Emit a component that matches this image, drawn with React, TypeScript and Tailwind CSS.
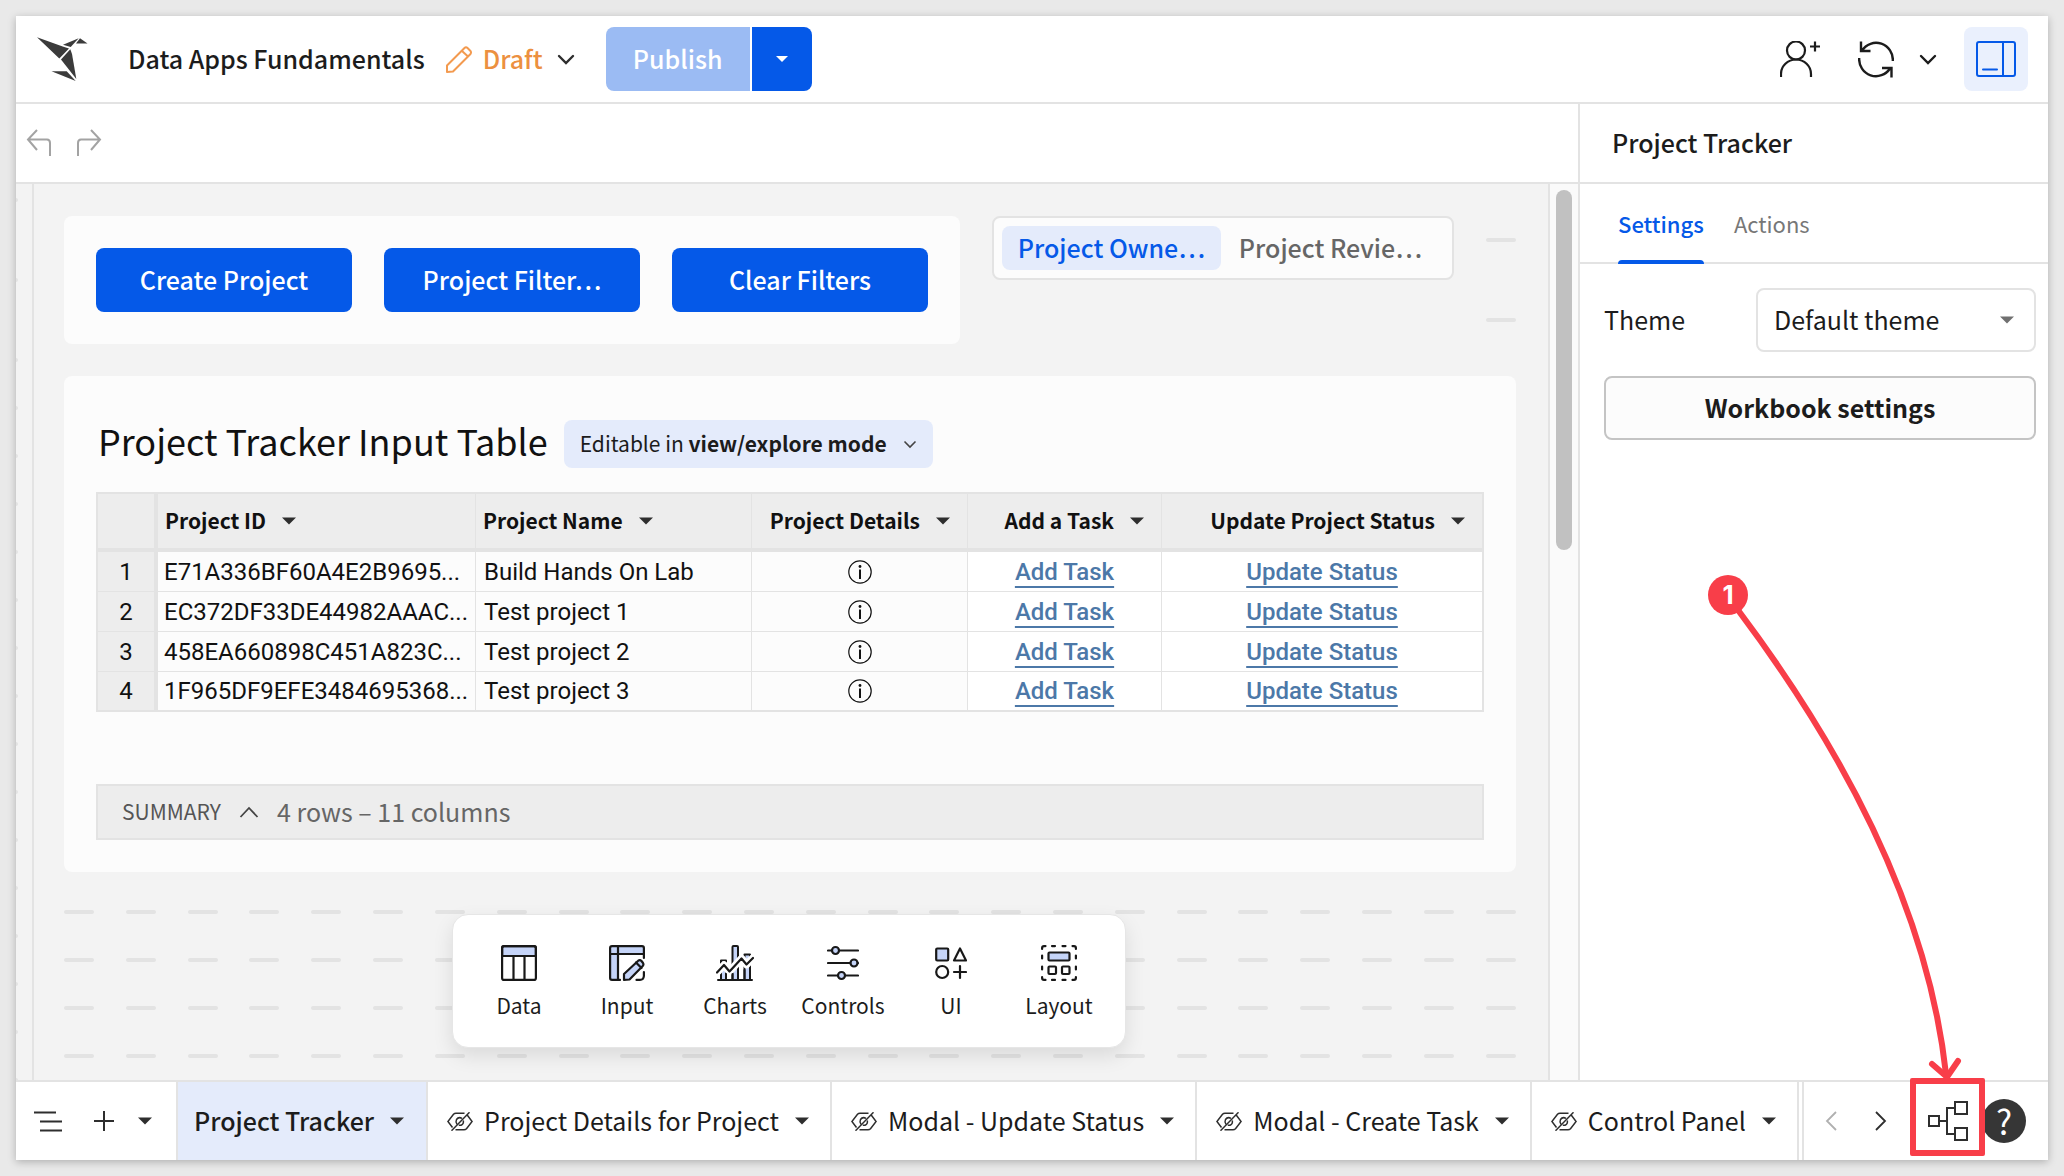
import React from "react";

type IconProps = { className?: string };

function Logo() {
  return (
    <svg width="52" height="46" viewBox="0 0 52 46" className="shrink-0" fill="#3b3b3b" aria-hidden="true">
      <path d="M0 1.300L25.700 10.500L32 12.500L22.300 22.500z" />
      <path d="M33.300 13.300L35 18L39.300 43L24 23.500z" />
      <path d="M26 8.700L41.700 2.200L33.700 11z" />
      <path d="M43 2.200L50.500 7.400H39z" />
      <path d="M14.500 35.200H29.700L38.700 45z" />
    </svg>
  );
}

function Caret({ className = "" }: IconProps) {
  return (
    <svg width="14" height="8" viewBox="0 0 14 8" className={"shrink-0 " + className} aria-hidden="true">
      <path d="M0 0.500h14L7 7.500z" fill="currentColor" />
    </svg>
  );
}

function ChevronDown({ className = "" }: IconProps) {
  return (
    <svg width="18" height="11" viewBox="0 0 18 11" fill="none" className={"shrink-0 " + className} aria-hidden="true">
      <path d="M2 2l7 7 7-7" stroke="currentColor" strokeWidth="2.400" strokeLinecap="round" />
    </svg>
  );
}

function PencilIcon() {
  return (
    <svg width="26" height="27" viewBox="0 0 26 27" fill="none" stroke="#f39a4f" strokeWidth="2" strokeLinejoin="round" className="shrink-0" aria-hidden="true">
      <path d="M1 26V19.500L18.500 2Q20 0.500 21.500 2L24.500 5Q25.500 6.500 24.500 8L7 25.500z" />
      <path d="M16 5l6 5.500" />
    </svg>
  );
}

function UndoIcon() {
  return (
    <svg width="26" height="28" viewBox="0 0 26 28" fill="none" stroke="#a3a3a3" strokeWidth="2" aria-hidden="true">
      <path d="M11 1L2 10.500L11 21M2 10.500H21Q24 10.500 24 14V27" />
    </svg>
  );
}

function RedoIcon() {
  return (
    <svg width="26" height="28" viewBox="0 0 26 28" fill="none" stroke="#a3a3a3" strokeWidth="2" aria-hidden="true">
      <path d="M15 1L24 10.500L15 21M24 10.500H5Q2 10.500 2 14V27" />
    </svg>
  );
}

function AddUserIcon() {
  return (
    <svg width="40" height="36" viewBox="0 0 40 36" fill="none" stroke="#1c1c1c" strokeWidth="2.200" aria-hidden="true">
      <circle cx="16" cy="9.500" r="9" />
      <path d="M1 36v-3A15 14.500 0 0 1 31 33v3M30 5.500h10M35 0.500v10" />
    </svg>
  );
}

function RefreshIcon() {
  return (
    <svg width="36" height="37" viewBox="0 0 36 37" fill="none" stroke="#1c1c1c" strokeWidth="2.400" aria-hidden="true">
      <path d="M34.800 20A16.800 17 0 0 0 4 9.500M3 0.500V10H12.500" />
      <path d="M1.200 17A16.800 17 0 0 0 32 27.500M33.500 36.500V27H24" />
    </svg>
  );
}

function PanelIcon() {
  return (
    <svg width="40" height="36" viewBox="0 0 40 36" fill="none" stroke="#0559e8" strokeWidth="2" aria-hidden="true">
      <rect x="1" y="1" width="38" height="34" rx="2" />
      <path d="M27 1v34M7 28.500h14" strokeLinecap="round" />
    </svg>
  );
}

function InfoIcon() {
  return (
    <svg width="24" height="24" viewBox="0 0 24 24" fill="none" className="mx-auto" aria-hidden="true">
      <circle cx="12" cy="12" r="11.200" stroke="#111" strokeWidth="1.200" />
      <circle cx="12" cy="6.500" r="1.400" fill="#111" />
      <path d="M12 9.500V19" stroke="#111" strokeWidth="2" />
    </svg>
  );
}

function HiddenIcon() {
  return (
    <svg width="26" height="19" viewBox="0 0 26 19" fill="none" stroke="#2e2e2e" strokeWidth="1.500" className="shrink-0" aria-hidden="true">
      <path d="M17.500 1.200H9Q7.500 1.200 6.500 2.200L0.900 9.500L5.500 15.500M20 2.700L25.100 9.500L19.500 16.800Q18.500 17.800 17 17.800H8.500" />
      <path d="M22.500 0.300L4.500 18.700" />
      <path d="M15 6.300Q11.500 4.500 9.500 7.500Q8.300 10 10 12.300M16.300 8.500Q17 12 14 13.300L11.800 13.200" />
    </svg>
  );
}

function OutlineIcon() {
  return (
    <svg width="29" height="21" viewBox="0 0 29 21" stroke="#2e2e2e" strokeWidth="2" aria-hidden="true">
      <path d="M0 1.500h22M6 10.500h22M6 19.500h22" />
    </svg>
  );
}

function PlusIcon() {
  return (
    <svg width="20" height="20" viewBox="0 0 20 20" stroke="#2e2e2e" strokeWidth="2" aria-hidden="true">
      <path d="M10 0v20M0 10h20" />
    </svg>
  );
}

function LineageIcon() {
  return (
    <svg width="41" height="40" viewBox="0 0 41 40" fill="none" stroke="#2e2e2e" strokeWidth="2" aria-hidden="true">
      <rect x="1" y="15" width="10" height="10" />
      <rect x="27" y="1" width="12" height="12" />
      <rect x="27" y="27" width="12" height="12" />
      <path d="M11 20h8M27 7h-8v26h8" />
    </svg>
  );
}

const stroke = { stroke: "#181818", strokeWidth: 2.2, strokeLinecap: "round", strokeLinejoin: "round" } as const;

function DataIcon() {
  return (
    <svg width="36" height="36" viewBox="0 0 36 36" fill="none" {...stroke} aria-hidden="true">
      <path d="M1.100 11V3Q1.100 1.100 3 1.100H33Q34.900 1.100 34.900 3V11z" fill="#c5d4f8" />
      <rect x="1.100" y="1.100" width="33.800" height="33.800" rx="2" />
      <path d="M1.100 11H34.900M12.500 11V35M23.500 11V35" />
    </svg>
  );
}

function InputIcon() {
  return (
    <svg width="36" height="36" viewBox="0 0 36 36" fill="none" {...stroke} aria-hidden="true">
      <path d="M9 1.100H33Q34.900 1.100 34.900 3V9H9V35H3Q1.100 35 1.100 33V3Q1.100 1.100 3 1.100z" fill="#c5d4f8" stroke="none" />
      <path d="M34.900 13V3Q34.900 1.100 33 1.100H3Q1.100 1.100 1.100 3V33Q1.100 34.900 3 34.900H11M9 1.100V35M1.100 9H34.900" />
      <path d="M15 34.900V29L29.500 15.500Q31 14.500 32.500 16L34 18Q35 19.500 33.700 21L20.500 34.500z" fill="#c5d4f8" />
      <path d="M27 17.500l5.500 5.500M34.900 27V31Q34.500 34.900 31 34.900H27.500" />
    </svg>
  );
}

function ChartsIcon() {
  return (
    <svg width="38" height="36" viewBox="0 0 38 36" fill="none" {...stroke} aria-hidden="true">
      <path d="M5 35V15.500H10V35M16.500 35V2Q16.500 1.100 17.500 1.100H21Q22 1.100 22 2V35M28.500 35V9.500H34V35" fill="#c5d4f8" strokeWidth="2" />
      <path d="M1 27.500L8 20L13.500 26.500L25.500 13.500L30.500 19.500L37 13" stroke="#fff" strokeWidth="7.500" />
      <path d="M1 27.500L8 20L13.500 26.500L25.500 13.500L30.500 19.500L37 13" />
      <path d="M2 34.900H36M5 30.500V35M10 29V35M16.500 29V35M22 25V35M28.500 25V35M34 24V35" strokeWidth="2" />
    </svg>
  );
}

function ControlsIcon() {
  return (
    <svg width="32" height="36" viewBox="0 0 32 36" fill="#c5d4f8" {...stroke} aria-hidden="true">
      <path d="M1 5.500H31M1 18H31M1 30.500H31" />
      <circle cx="8.500" cy="5.500" r="3.500" />
      <circle cx="27" cy="18" r="3.500" />
      <circle cx="14.500" cy="30.500" r="3.500" />
    </svg>
  );
}

function UiIcon() {
  return (
    <svg width="32" height="36" viewBox="0 0 32 36" fill="none" {...stroke} aria-hidden="true">
      <rect x="1.200" y="3.500" width="12" height="12" rx="1" fill="#c5d4f8" />
      <path d="M25 3.500L31 15.500H19z" />
      <circle cx="7.200" cy="27" r="6" />
      <path d="M25 21v12M19 27h12" />
    </svg>
  );
}

function LayoutIcon() {
  return (
    <svg width="36" height="36" viewBox="0 0 36 36" fill="none" {...stroke} aria-hidden="true">
      <path d="M1.100 4V3Q1.100 1.100 3 1.100H4.500M31.500 1.100H33Q34.900 1.100 34.900 3V4M34.900 32V33Q34.900 34.900 33 34.900H31.500M4.500 34.900H3Q1.100 34.900 1.100 33V32" />
      <path d="M11 1.100H14M21.500 1.100H24.500M11 34.900H14M21.500 34.900H24.500M1.100 10.500V13.500M1.100 21.500V24.500M34.900 10.500V13.500M34.900 21.500V24.500" />
      <rect x="7.500" y="7.500" width="21" height="8" rx="1" fill="#c5d4f8" />
      <rect x="7.500" y="21.500" width="7.500" height="7.500" rx="1" />
      <rect x="21" y="21.500" width="7.500" height="7.500" rx="1" />
    </svg>
  );
}

const rows = [
  { id: "E71A336BF60A4E2B9695...", name: "Build Hands On Lab" },
  { id: "EC372DF33DE44982AAAC...", name: "Test project 1" },
  { id: "458EA660898C451A823C...", name: "Test project 2" },
  { id: "1F965DF9EFE3484695368...", name: "Test project 3" },
];

const elements = [
  { label: "Data", Icon: DataIcon },
  { label: "Input", Icon: InputIcon },
  { label: "Charts", Icon: ChartsIcon },
  { label: "Controls", Icon: ControlsIcon },
  { label: "UI", Icon: UiIcon },
  { label: "Layout", Icon: LayoutIcon },
];

const pages = ["Project Details for Project", "Modal - Update Status", "Modal - Create Task", "Control Panel"];

function Header() {
  return (
    <header className="flex h-[88px] shrink-0 items-center border-b-2 border-[#e3e3e3] pr-5 pl-[21px]">
      <Logo />
      <h1 className="ml-[39px] text-[25px] font-medium whitespace-nowrap">Data Apps Fundamentals</h1>
      <button className="ml-[21px] flex items-center text-[25px] font-medium text-[#ec9040]">
        <PencilIcon />
        <span className="ml-[11px]">Draft</span>
        <ChevronDown className="ml-[14px] text-[#2e2e2e]" />
      </button>
      <div className="ml-[31px] flex h-16 gap-[2px] overflow-hidden rounded-lg text-white">
        <button className="w-[144px] bg-[#9bbbf3] text-[25px] font-medium">Publish</button>
        <button className="flex w-[60px] items-center justify-center bg-[#0559e8]" aria-label="Publish options">
          <Caret className="w-[12px]" />
        </button>
      </div>
      <div className="ml-auto flex items-center">
        <button aria-label="Share"><AddUserIcon /></button>
        <button className="ml-[38px]" aria-label="Refresh"><RefreshIcon /></button>
        <button className="ml-[25px]" aria-label="Refresh options"><ChevronDown /></button>
        <button className="ml-[27px] flex size-16 items-center justify-center rounded-lg bg-[#eaf0fd]" aria-label="Toggle panel">
          <PanelIcon />
        </button>
      </div>
    </header>
  );
}

function HeadCell({ children, right = false }: { children: React.ReactNode; right?: boolean }) {
  return (
    <th className="h-[58px] border-r border-b-4 border-[#e3e3e3] p-0 last:border-r-0">
      <div className={right ? "flex items-center justify-end gap-4 pr-[17px]" : "flex items-center gap-4 pl-[7px]"}>
        <span className="text-[21px] font-bold whitespace-nowrap">{children}</span>
        <Caret className="text-[#2e2e2e]" />
      </div>
    </th>
  );
}

function ProjectTable() {
  return (
    <div className="mt-6 border-2 border-[#e3e3e3]">
      <table className="w-full table-fixed border-separate border-spacing-0 text-[#111]">
        <colgroup>
          <col className="w-[60px]" />
          <col className="w-[318px]" />
          <col className="w-[276px]" />
          <col className="w-[216px]" />
          <col className="w-[194px]" />
          <col />
        </colgroup>
        <thead className="bg-[#ededed]">
          <tr>
            <th className="border-r-4 border-b-4 border-[#e3e3e3]" aria-label="Row" />
            <HeadCell>Project ID</HeadCell>
            <HeadCell>Project Name</HeadCell>
            <HeadCell right>Project Details</HeadCell>
            <HeadCell right>Add a Task</HeadCell>
            <HeadCell right>Update Project Status</HeadCell>
          </tr>
        </thead>
        <tbody className="font-[Roboto,sans-serif] text-[24px] leading-[38px] [&>tr:last-child>*]:h-[38px] [&>tr:last-child>*]:border-b-0">
          {rows.map((r, i) => (
            <tr key={r.id}>
              <th className="h-10 border-r-4 border-b border-[#e3e3e3] bg-[#ededed] p-0 text-center font-normal">{i + 1}</th>
              <td className="overflow-hidden border-r border-b border-[#e3e3e3] p-0 pl-1.5 whitespace-nowrap">{r.id}</td>
              <td className="border-r border-b border-[#e3e3e3] p-0 pl-2">{r.name}</td>
              <td className="border-r border-b border-[#e3e3e3] p-0"><InfoIcon /></td>
              <td className="border-r border-b border-[#e3e3e3] bg-white p-0 text-center">
                <a href="#add-task" className="font-medium text-[#4c78a8] underline decoration-2 underline-offset-[6px] [text-decoration-skip-ink:none]">Add Task</a>
              </td>
              <td className="border-b border-[#e3e3e3] bg-white p-0 text-center">
                <a href="#update-status" className="font-medium text-[#4c78a8] underline decoration-2 underline-offset-[6px] [text-decoration-skip-ink:none]">Update Status</a>
              </td>
            </tr>
          ))}
        </tbody>
      </table>
    </div>
  );
}

function Dash() {
  return <span className="h-1 w-[30px] shrink-0 rounded-xs bg-[#e3e3e3]" />;
}

function Canvas() {
  const action = "h-16 rounded-lg bg-[#0559e8] text-[25px] font-medium text-white";
  return (
    <div className="relative min-w-0 flex-1 overflow-hidden border-x-2 border-[#e3e3e3] pt-8 pr-8 pl-[30px]">
      <div className="grid grid-cols-[896fr_462fr_30fr] items-start gap-8">
        <div className="grid grid-cols-3 gap-8 rounded-lg bg-[#fcfcfc] p-8">
          <button className={action}>Create Project</button>
          <button className={action}>Project Filter…</button>
          <button className={action}>Clear Filters</button>
        </div>
        <div className="flex h-16 items-center rounded-lg border-2 border-[#e3e3e3] bg-[#fcfcfc] px-2 text-[25px] font-medium whitespace-nowrap" role="tablist">
          <button role="tab" aria-selected="true" className="h-11 flex-1 rounded-lg bg-[#e4ebfb] text-[#0559e8]">Project Owne…</button>
          <button role="tab" aria-selected="false" className="h-11 flex-1 pr-1 text-[#666]">Project Revie…</button>
        </div>
        <div className="flex flex-col gap-[76px] pt-[22px]">
          <Dash />
          <Dash />
        </div>
      </div>

      <section className="mt-8 rounded-lg bg-[#fcfcfc] px-8 pt-11 pb-8">
        <div className="flex h-12 items-center">
          <h2 className="pb-2 pl-0.5 text-[36px] text-[#111]">Project Tracker Input Table</h2>
          <button className="ml-4 flex h-12 items-center rounded-lg bg-[#e4ebfb] px-4 text-[21px]">
            <span>Editable in <span className="font-bold">view/explore mode</span></span>
            <svg width="14" height="9" viewBox="0 0 14 9" fill="none" className="ml-4" aria-hidden="true">
              <path d="M1.500 1.500L7 7l5.500-5.500" stroke="#444" strokeWidth="1.600" />
            </svg>
          </button>
        </div>
        <ProjectTable />
        <div className="mt-[72px] flex h-14 items-center border-2 border-[#e3e3e3] bg-[#ededed] pl-6">
          <button className="flex items-center text-[21px] text-[#555]">
            SUMMARY
            <svg width="20" height="12" viewBox="0 0 20 12" fill="none" className="ml-[18px]" aria-hidden="true">
              <path d="M1.500 11L10 2l8.500 9" stroke="#444" strokeWidth="1.800" />
            </svg>
          </button>
          <span className="ml-[18px] text-[25px] text-[#666]">4 rows – 11 columns</span>
        </div>
      </section>

      <div className="mt-[38px] flex flex-col gap-11" aria-hidden="true">
        {[0, 1, 2, 3].map((r) => (
          <div key={r} className="flex justify-between">
            {Array.from({ length: 24 }, (_, c) => <Dash key={c} />)}
          </div>
        ))}
      </div>

      <div className="absolute right-1 bottom-8 left-0 flex justify-center">
        <div className="flex h-[134px] items-center rounded-2xl border border-[#e6e6e6] bg-white px-3 pt-1 shadow-[0_8px_20px_rgba(0,0,0,0.10)]">
          {elements.map(({ label, Icon }) => (
            <button key={label} className="flex w-[108px] flex-col items-center gap-2 text-[21px] leading-8">
              <Icon />
              {label}
            </button>
          ))}
        </div>
      </div>
    </div>
  );
}

function SidePanel() {
  return (
    <aside className="flex w-[470px] shrink-0 flex-col border-l-2 border-[#e3e3e3]">
      <h2 className="flex h-20 items-center border-b-2 border-[#e3e3e3] pl-8 text-[25px] font-medium">Project Tracker</h2>
      <div className="flex h-20 gap-[30px] border-b-2 border-[#e3e3e3] pl-[38px] text-[22px]" role="tablist">
        <button role="tab" aria-selected="true" className="relative h-full font-medium text-[#0559e8]">
          Settings
          <span className="absolute inset-x-0 -bottom-0.5 h-1 rounded-t bg-[#0559e8]" />
        </button>
        <button role="tab" aria-selected="false" className="h-full text-[#777]">Actions</button>
      </div>
      <div className="flex flex-col gap-6 pt-6 pr-3 pl-6 text-[25px]">
        <div className="flex items-center justify-between">
          <label htmlFor="theme">Theme</label>
          <div className="relative w-[280px]">
            <select id="theme" className="h-16 w-full appearance-none rounded-lg border-2 border-[#e3e3e3] bg-white pl-4">
              <option>Default theme</option>
            </select>
            <Caret className="pointer-events-none absolute top-7 right-[22px] text-[#707070]" />
          </div>
        </div>
        <button className="h-16 rounded-lg border-2 border-[#c4c4c4] bg-[#fcfcfc] font-bold">Workbook settings</button>
      </div>
    </aside>
  );
}

function BottomBar() {
  return (
    <footer className="flex h-20 shrink-0 border-t-2 border-[#e3e3e3] text-[25px] whitespace-nowrap">
      <div className="flex w-[160px] shrink-0 items-center pl-[18px]">
        <button aria-label="Page list"><OutlineIcon /></button>
        <button className="ml-[31px]" aria-label="Add page"><PlusIcon /></button>
        <button className="ml-6" aria-label="Add page options"><Caret className="text-[#2e2e2e]" /></button>
      </div>
      <nav className="flex min-w-0 flex-1 overflow-hidden">
        <button className="flex shrink-0 items-center gap-4 border-x-2 border-[#e3e3e3] bg-[#e4ebfb] pr-[22px] pl-4 font-medium">
          Project Tracker
          <Caret className="text-[#2e2e2e]" />
        </button>
        {pages.map((p) => (
          <button key={p} className="flex shrink-0 items-center border-r-2 border-[#e3e3e3] pr-[21px] pl-[19px]">
            <HiddenIcon />
            <span className="ml-[11px]">{p}</span>
            <Caret className="ml-4 text-[#2e2e2e]" />
          </button>
        ))}
      </nav>
      <div className="flex w-[246px] shrink-0 items-center border-l-2 border-[#e3e3e3] pl-[21px]">
        <button aria-label="Previous pages">
          <svg width="12" height="20" viewBox="0 0 12 20" fill="none" aria-hidden="true">
            <path d="M11 1L2 10l9 9" stroke="#b0b0b0" strokeWidth="1.800" />
          </svg>
        </button>
        <button className="ml-[38px]" aria-label="Next pages">
          <svg width="12" height="20" viewBox="0 0 12 20" fill="none" aria-hidden="true">
            <path d="M1 1l9 9-9 9" stroke="#2e2e2e" strokeWidth="1.800" />
          </svg>
        </button>
        <button className="relative z-10 ml-[41px]" aria-label="Lineage">
          <LineageIcon />
          <span className="absolute -top-[23px] -right-4 -bottom-[15px] -left-[18px] rounded-xs border-6 border-[#f83e49]" />
        </button>
        <button className="ml-[13px] flex size-11 items-center justify-center rounded-full bg-[#363636] text-[34px] leading-none text-white" aria-label="Help">?</button>
      </div>
    </footer>
  );
}

function Callout() {
  return (
    <svg width="270" height="512" viewBox="1700 570 270 512" fill="none" className="pointer-events-none absolute right-[78px] bottom-[78px]" aria-label="Step 1">
      <g stroke="#f83e49" strokeWidth="6" strokeLinecap="round" strokeLinejoin="round">
        <path d="M1738 610Q1922 855 1946 1074" />
        <path d="M1932 1064L1947 1077L1958 1061" />
      </g>
      <circle cx="1728" cy="595" r="20" fill="#f83e49" />
      <text x="1728" y="604" textAnchor="middle" fill="#fff" className="font-[Inter,sans-serif] text-[26px] font-bold">1</text>
    </svg>
  );
}

export default function App() {
  return (
    <div className="h-screen min-h-[900px] bg-[#e9e9e9] p-4 font-['Noto_Sans_CJK_SC',sans-serif] text-[#1c1c1c]">
      <div className="relative flex h-full flex-col bg-white shadow-[0_2px_8px_rgba(0,0,0,0.25)]">
        <Header />
        <div className="flex min-h-0 flex-1">
          <main className="flex min-w-0 flex-1 flex-col">
            <div className="flex h-20 shrink-0 items-center gap-6 border-b-2 border-[#e3e3e3] pl-[10px]">
              <button aria-label="Undo"><UndoIcon /></button>
              <button aria-label="Redo"><RedoIcon /></button>
            </div>
            <div className="flex min-h-0 flex-1 bg-[#f3f3f3]">
              <div className="flex w-4 shrink-0 flex-col overflow-hidden pt-[14px]" aria-hidden="true">
                {Array.from({ length: 18 }, (_, i) => (
                  <span key={i} className={i < 2 ? "mb-[76px] h-1 w-0.5 shrink-0 rounded-r bg-[#e3e3e3]" : "mb-11 h-1 w-0.5 shrink-0 rounded-r bg-[#e3e3e3]"} />
                ))}
              </div>
              <Canvas />
              <div className="flex w-7 shrink-0 justify-center bg-[#fafafa] pt-1.5">
                <div className="h-[360px] w-4 rounded-full bg-[#c1c1c1]" />
              </div>
            </div>
          </main>
          <SidePanel />
        </div>
        <BottomBar />
        <Callout />
      </div>
    </div>
  );
}
